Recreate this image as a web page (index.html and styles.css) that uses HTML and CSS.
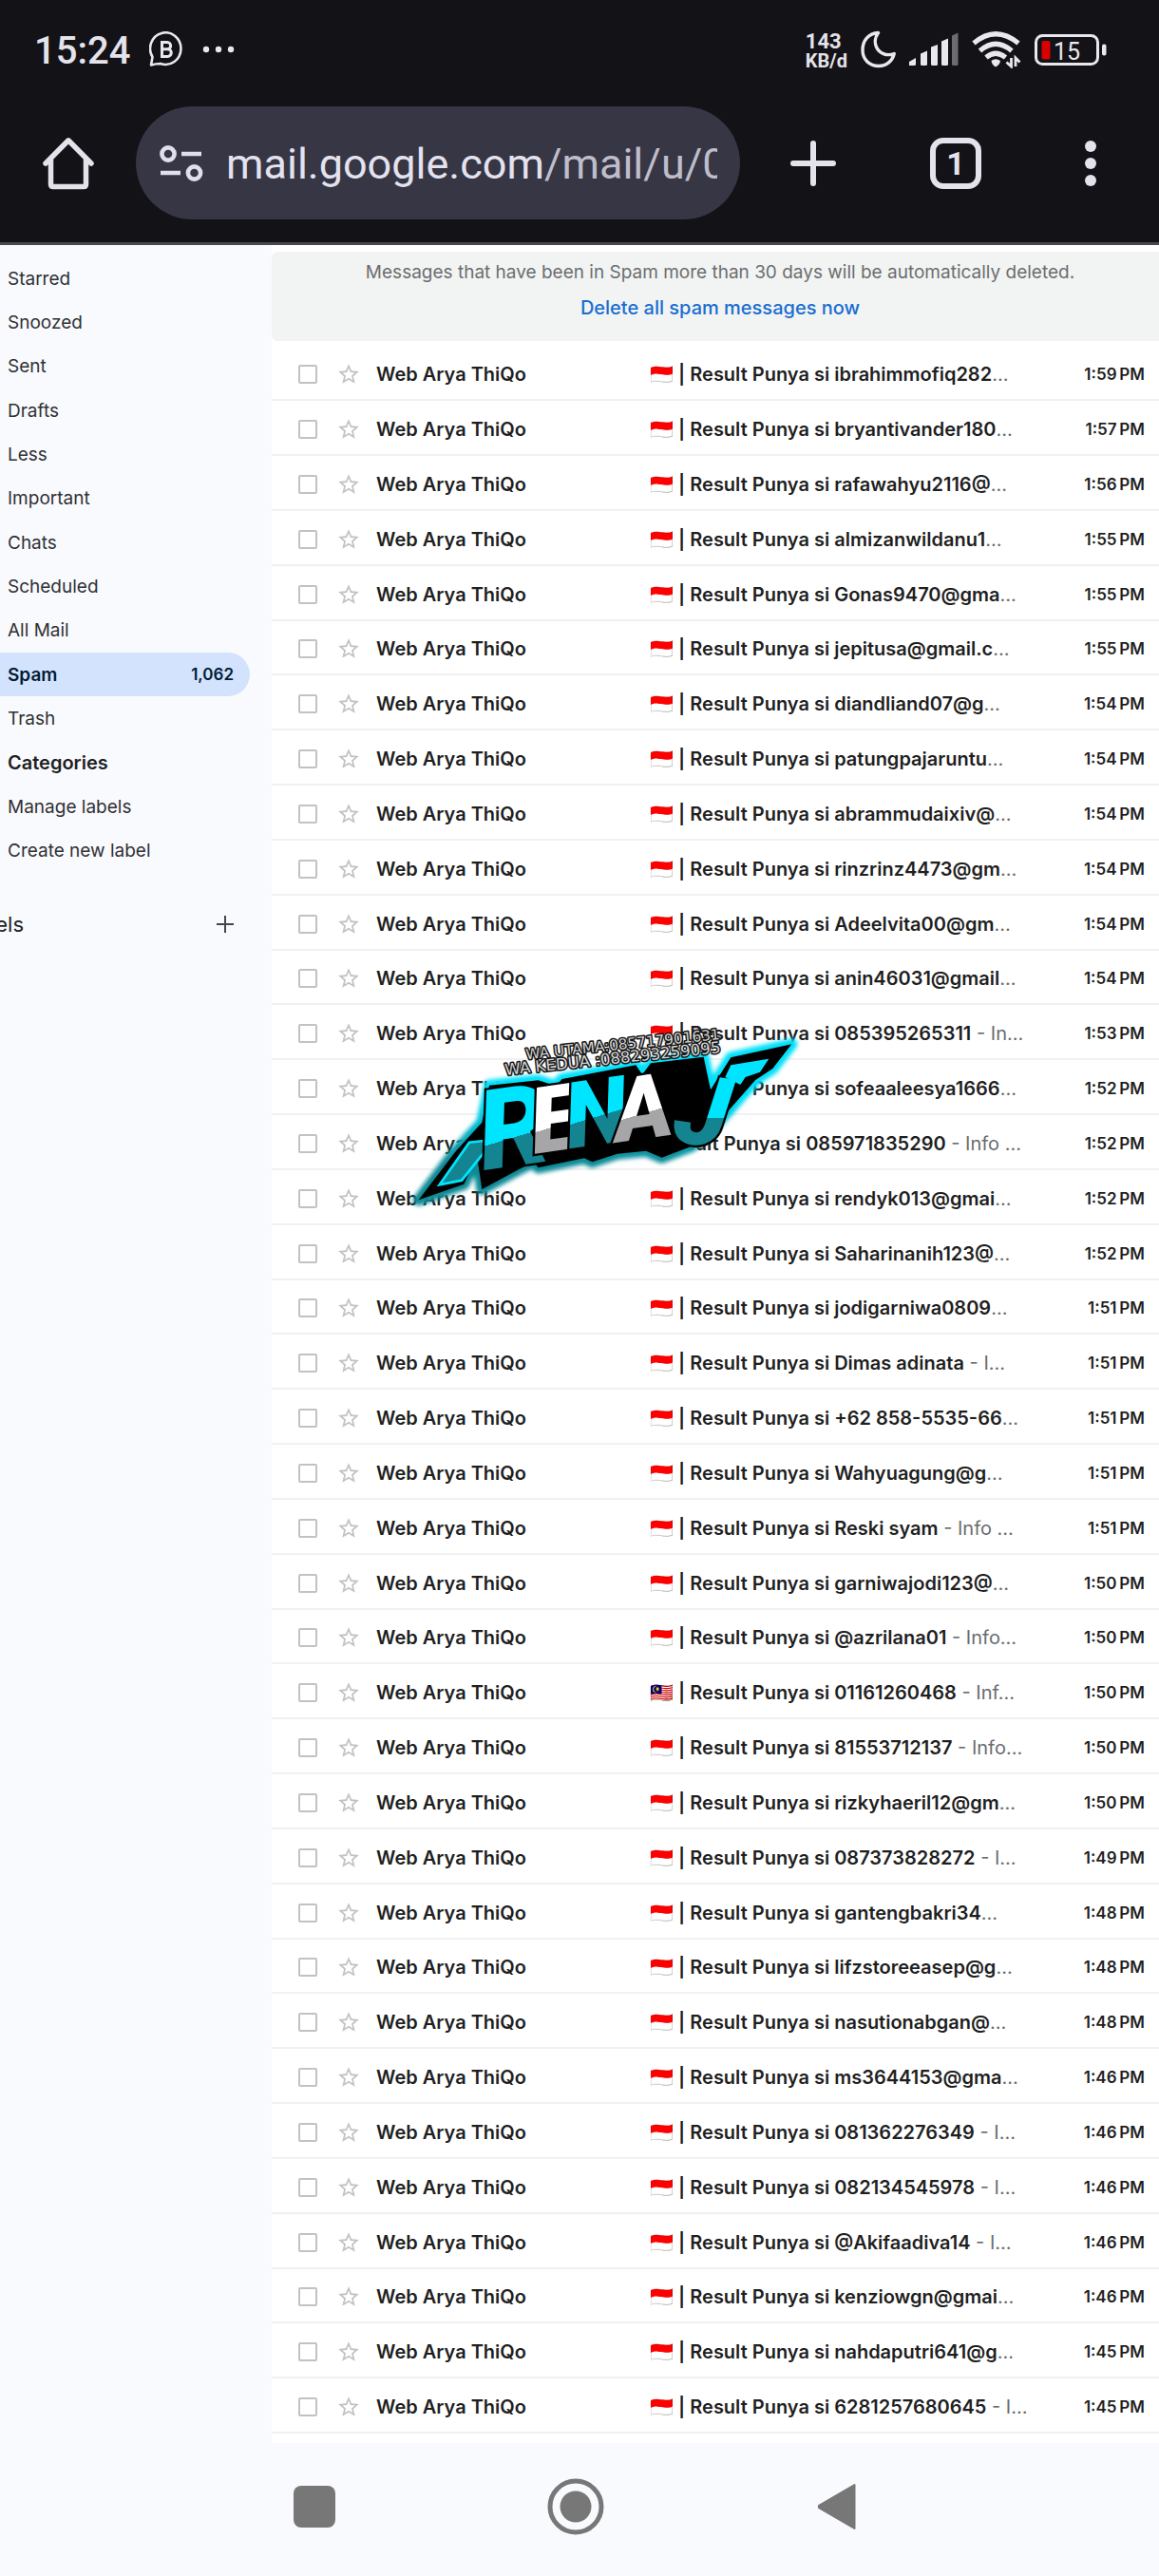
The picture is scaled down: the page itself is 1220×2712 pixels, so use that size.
FILE: index.html
```
<!DOCTYPE html>
<html lang="en">
<head>
<meta charset="utf-8">
<meta name="viewport" content="width=device-width, initial-scale=1">
<title>Spam - Gmail</title>
<link rel="stylesheet" href="styles.css">
</head>
<body>
<header class="chrome">
  <div class="status">
    <span class="clock">15:24</span>
    <svg class="wa" width="36" height="38" viewBox="0 0 36 38" aria-hidden="true"><path d="M2 35.500 L3.500 27 A16.200 16.800 0 1 1 12 34 Q7 34 2 35.500 Z" fill="none" stroke="#e9e8ee" stroke-width="2.600" stroke-linejoin="round"/><path d="M13.500 11.500 h5.500 a3.600 3.600 0 0 1 0 7.300 h-5.500 z M13.500 18.800 h6 a3.800 3.800 0 0 1 0 7.600 h-6 z" fill="none" stroke="#e9e8ee" stroke-width="3"/></svg>
    <svg width="34" height="8" viewBox="0 0 34 8" aria-hidden="true"><g fill="#e9e8ee"><circle cx="4" cy="4" r="3.200"/><circle cx="17" cy="4" r="3.200"/><circle cx="30" cy="4" r="3.200"/></g></svg>
    <div class="indicators">
      <span class="speed"><span class="rate">143</span><span class="unit">KB/d</span></span>
      <svg width="37" height="40" viewBox="0 0 37 40" aria-hidden="true"><path d="M18.500 2.500 C8 3 2 11 2 20.500 C2 31 9.500 37.500 19 37.500 C27 37.500 33.500 32 35.200 24.500 C27 27.500 19.500 24 16.500 17.500 C14.200 12.500 15.500 6.500 18.500 2.500 Z" fill="none" stroke="#e9e8ee" stroke-width="3.400" stroke-linejoin="round"/></svg>
      <svg width="52" height="40" viewBox="0 0 52 40" aria-hidden="true"><g fill="#e9e8ee"><path d="M0 37 V33 L7 29 V35.500 Q7 37 5.500 37Z"/><path d="M12 24.500 L19 21.500 V35.500 Q19 37 17.500 37 H13.500 Q12 37 12 35.500Z"/><path d="M23 17.500 L30 15 V35.500 Q30 37 28.500 37 H24.500 Q23 37 23 35.500Z"/><path d="M34 11.500 L41 8.500 V35.500 Q41 37 39.500 37 H35.500 Q34 37 34 35.500Z"/></g><path d="M45 5.500 L51.500 2.500 V35.500 Q51.500 37 50 37 H46.500 Q45 37 45 35.500Z" fill="#6c6b70"/></svg>
      <svg width="52" height="40" viewBox="0 0 52 40" aria-hidden="true"><g fill="none" stroke="#e9e8ee" stroke-width="5.200"><path d="M2 13.500 Q25 -6 49 13.500"/><path d="M8.500 21.500 Q25 7 42 21.500"/><path d="M15 28.500 Q25 20 35.500 28.500"/></g><path d="M20.500 32 Q25 28.500 30 32 Q29.500 36 25 38.500 Q21 36 20.500 32Z" fill="#e9e8ee"/><path d="M41.500 29 V38 L36.500 33.500 M46 38 V29 L50.500 33.500" fill="none" stroke="#e9e8ee" stroke-width="2.800"/></svg>
      <svg width="76" height="40" viewBox="0 0 76 40" role="img" aria-label="Battery 15 percent"><rect x="1.500" y="5.500" width="65" height="30" rx="7" fill="none" stroke="#e9e8ee" stroke-width="3"/><rect x="7.500" y="11" width="9" height="19.500" rx="2" fill="#d80000"/><rect x="71" y="14.500" width="4.500" height="12" rx="2" fill="#e9e8ee"/><text class="batt" x="34" y="31" text-anchor="middle">15</text></svg>
    </div>
  </div>
  <div class="toolbar">
    <button class="home" aria-label="Home"><svg width="56" height="56" viewBox="0 0 56 56"><path d="M9.500 24 V50 Q9.500 52.500 12 52.500 H44 Q46.500 52.500 46.500 50 V24 M4 28 L28 3.800 L52 28" fill="none" stroke="#e4e2ea" stroke-width="5.500" stroke-linecap="round" stroke-linejoin="round"/></svg></button>
    <div class="omnibox">
      <svg width="46" height="40" viewBox="0 0 46 40" aria-hidden="true"><g fill="none" stroke="#e0dfee" stroke-width="4.600"><circle cx="9" cy="10" r="6.600"/><circle cx="36.500" cy="30" r="6.600"/><path d="M23 10 H44 M1 30 H22"/></g></svg>
      <button class="url">mail.google.com<span class="path">/mail/u/0</span></button>
    </div>
    <button class="new" aria-label="New tab"><svg width="48" height="48" viewBox="0 0 48 48"><path d="M24 3 V45 M3 24 H45" stroke="#e4e2ea" stroke-width="6" stroke-linecap="round"/></svg></button>
    <button class="tabs" aria-label="Open tabs"><span>1</span></button>
    <button class="more" aria-label="Menu"><svg width="12" height="48" viewBox="0 0 12 48"><g fill="#e4e2ea"><circle cx="6" cy="6" r="6"/><circle cx="6" cy="24" r="6"/><circle cx="6" cy="42" r="6"/></g></svg></button>
  </div>
</header>

<div class="page">
  <aside class="side">
    <nav class="folders" aria-label="Folders">
      <a href="#starred">Starred</a>
      <a href="#snoozed">Snoozed</a>
      <a href="#sent">Sent</a>
      <a href="#drafts">Drafts</a>
      <a href="#less">Less</a>
      <a href="#important">Important</a>
      <a href="#chats">Chats</a>
      <a href="#scheduled">Scheduled</a>
      <a href="#all">All Mail</a>
      <a href="#spam" class="current">Spam<span class="count">1,062</span></a>
      <a href="#trash">Trash</a>
      <a href="#categories" class="strong">Categories</a>
      <a href="#manage">Manage labels</a>
      <a href="#create">Create new label</a>
    </nav>
    <div class="labels">
      <h2>Labels</h2>
      <button aria-label="Create new label"><svg width="18" height="18" viewBox="0 0 18 18"><path d="M9 0 V18 M0 9 H18" stroke="#444746" stroke-width="2"/></svg></button>
    </div>
  </aside>
  <main class="mail">
    <section class="banner">
      <p>Messages that have been in Spam more than 30 days will be automatically deleted.</p>
      <a href="#delete">Delete all spam messages now</a>
    </section>
    <table class="list" aria-label="Spam messages">
      <colgroup><col class="c-check"><col class="c-star"><col class="c-from"><col><col class="c-time"></colgroup>
      <tbody id="rows"></tbody>
    </table>
  </main>
</div>

<nav class="system" aria-label="System navigation">
  <button aria-label="Recent apps"><svg width="44" height="44" viewBox="0 0 44 44"><rect width="44" height="44" rx="8" fill="#777778"/></svg></button>
  <button aria-label="Home screen"><svg width="60" height="60" viewBox="0 0 60 60"><circle cx="30" cy="30" r="27" fill="none" stroke="#777778" stroke-width="5"/><circle cx="30" cy="30" r="16.500" fill="#777778"/></svg></button>
  <button aria-label="Back"><svg width="42" height="50" viewBox="0 0 42 50"><path d="M39.500 2 V48 L2.500 26.500 Q1 25 2.500 23.500 Z" fill="#777778" stroke="#777778" stroke-width="2" stroke-linejoin="round"/></svg></button>
</nav>

<svg class="watermark" width="440" height="230" viewBox="0 0 1320 690" role="img" aria-label="RENAJ">
  <defs>
    <linearGradient id="glow" x1="0" y1="0" x2="0" y2="1"><stop offset=".35" stop-color="#00e1fb"/><stop offset=".75" stop-color="#0c8a96"/></linearGradient>
    <linearGradient id="cyan" gradientUnits="userSpaceOnUse" x1="0" y1="-200" x2="30" y2="0"><stop offset=".62" stop-color="#00e5ff"/><stop offset=".62" stop-color="#148590"/></linearGradient>
    <linearGradient id="white" gradientUnits="userSpaceOnUse" x1="0" y1="-200" x2="30" y2="0"><stop offset=".66" stop-color="#ffffff"/><stop offset=".66" stop-color="#a6a6a8"/></linearGradient>
    <filter id="soft" x="-10%" y="-10%" width="120%" height="120%"><feGaussianBlur stdDeviation="7"/></filter>
    <path id="shape" d="M62 610 L180 455 L262 365 L285 248 L440 232 L495 250 L515 228 L748 184 L768 214 L795 178 L962 158 L984 262 L1048 160 L1240 118 L1180 195 L1125 232 L990 385 L925 440 L830 476 L780 455 L690 464 L610 490 L585 478 L440 508 L425 490 L375 515 L262 576 L246 470 L205 560 Z"/>
  </defs>
  <use href="#shape" fill="#0aa" stroke="url(#glow)" stroke-width="36" stroke-linejoin="round" filter="url(#soft)"/>
  <use href="#shape" fill="#000"/>
  <path d="M128 562 L222 428 L300 420 L198 548 Z" fill="#148590" stroke="#00e5ff" stroke-width="8"/>
  <g class="logo">
    <text transform="translate(268 516) rotate(-8)" font-size="350" fill="url(#cyan)">R</text>
    <text transform="translate(428 464) rotate(-8)" font-size="290" fill="url(#white)">E</text>
    <text transform="translate(538 448) rotate(-8)" font-size="290" fill="url(#cyan)">N</text>
    <text transform="translate(690 428) rotate(-8)" font-size="280" fill="url(#white)">A</text>
    <text transform="translate(860 424) rotate(8)" font-size="310" fill="url(#cyan)">J</text>
  </g>
  <path d="M1030 222 L1048 184 L1168 164 L1140 206 L1094 222 L1078 246 Z" fill="#00e5ff"/>
  <g class="contact">
    <text transform="translate(402 166) rotate(-6)">WA UTAMA:085717901631</text>
    <text transform="translate(336 216) rotate(-6)" class="second">WA KEDUA :088293259095</text>
  </g>
</svg>
<script src="rows.js"></script>
</body>
</html>
```
FILE: styles.css
```
* { box-sizing: border-box; }
body { margin: 0; background: #f9fafe; color: #1f1f1f; font-family: Inter, "Noto Sans", sans-serif; position: relative; }
button { border: 0; padding: 0; background: none; color: inherit; display: flex; align-items: center; justify-content: center; font: inherit; }
svg { display: block; flex: none; }
a { text-decoration: none; color: inherit; }

/* Phone status bar and browser toolbar */
.chrome { background: #131217; border-bottom: 3px solid #48474c; color: #e4e2ea; font-family: Roboto, sans-serif; padding-bottom: 24px; }
.status { display: flex; align-items: center; height: 112px; padding: 0 55px 8px 36px; gap: 20px; }
.clock { font-size: 40px; font-weight: 500; line-height: 44px; padding-top: 4px; }
.indicators { display: flex; align-items: center; gap: 14px; margin-left: auto; }
.speed { display: flex; flex-direction: column; font-weight: 700; font-size: 20px; line-height: 20px; padding-top: 4px; }
.rate { font-size: 22px; }
.batt { font-size: 25px; fill: #e9e8ee; }
.toolbar { display: flex; align-items: center; }
.home { width: 143px; height: 119px; }
.omnibox { display: flex; align-items: center; gap: 24px; flex: 1; min-width: 0; height: 119px; border-radius: 60px; background: #363645; padding: 0 24px 0 25px; }
.url { flex: 1; min-width: 0; overflow: hidden; justify-content: flex-start; white-space: nowrap; font-size: 45px; line-height: 60px; padding-top: 2px; color: #e4e2ee; }
.path { color: #bfbdca; }
.new { width: 154px; height: 119px; }
.tabs { width: 146px; height: 119px; }
.tabs span { width: 54px; height: 54px; border: 6px solid #e4e2ea; border-radius: 14px; font-size: 34px; font-weight: 700; line-height: 42px; text-align: center; }
.more { width: 141px; height: 119px; padding-right: 4px; }

/* Sidebar */
.page { display: grid; grid-template-columns: 286px minmax(0, 1fr); }
.side { padding: 12px 23px 0 0; }
.folders { display: flex; flex-direction: column; font-size: 19px; }
.folders a { display: flex; align-items: center; justify-content: space-between; height: 46px; padding: 0 17px 0 8px; border-radius: 0 23px 23px 0; color: #303134; }
.folders a:nth-child(3n) { height: 47px; }
.folders .current { background: #d3e2fd; color: #001d35; font-weight: 600; }
.folders .strong { color: #1f1f1f; font-weight: 600; font-size: 20px; }
.count { font-size: 17px; }
.labels { display: flex; align-items: center; justify-content: space-between; margin-top: 37px; padding-right: 17px; height: 36px; }
.labels h2 { display: flex; justify-content: flex-end; width: 25px; margin: 0; overflow: hidden; font-size: 22px; font-weight: 400; line-height: 36px; }

/* Message list */
.mail { background: #fff; padding: 7px 0 10px; }
.banner { height: 94px; padding: 3px 0 0 10px; border-radius: 6px 0 0 6px; background: #f2f4f3; text-align: center; font-size: 19px; line-height: 38px; color: #6b6d70; }
.banner p { margin: 0; }
.banner a { display: block; font-size: 20px; line-height: 36px; font-weight: 500; color: #1a6dd1; }
.list { width: 100%; margin-top: 5px; border-collapse: separate; border-spacing: 0; table-layout: fixed; font-size: 20px; line-height: 24px; white-space: nowrap; }
.c-check { width: 68px; }
.c-star { width: 42px; }
.c-from { width: 288px; }
.c-time { width: 110px; }
.list td { height: 58px; padding: 3px 0 0; border-bottom: 2px solid #f1f1f3; vertical-align: middle; overflow: hidden; }
.list tr:nth-child(6n) td { height: 57px; }
.list input { appearance: none; display: block; width: 20px; height: 20px; margin: 0 0 0 28px; border: 2px solid #c2c2c3; border-radius: 2px; }
.list .from, .list .topic { font-weight: 600; }
.list .rest { color: #6a6c70; font-weight: 400; }
.list .time { padding-right: 15px; text-align: right; font-size: 17px; font-weight: 600; }

/* Android navigation */
.system { display: flex; height: 140px; padding: 0 202px 7px 194px; }
.system button { flex: 1; }

/* Floating watermark */
.watermark { position: absolute; left: 420px; top: 1060px; }
.logo { font-family: Roboto, sans-serif; font-weight: 900; font-style: italic; stroke: #000; stroke-width: 14px; paint-order: stroke; }
.contact { font-family: "DejaVu Sans", sans-serif; font-size: 46px; fill: #d2d2d2; stroke: #151515; stroke-width: 9px; paint-order: stroke; stroke-linejoin: round; }
.contact .second { font-size: 50px; }
```
FILE: rows.js
```
// Each message: subject tail, snippet after the subject, minutes past one o'clock, flag if not the usual one.
const messages = [
  ["ibrahimmofiq282", "…", 59], ["bryantivander180", "…", 57], ["rafawahyu2116@", "…", 56],
  ["almizanwildanu1", "…", 55], ["Gonas9470@gma", "…", 55], ["jepitusa@gmail.c", "…", 55],
  ["diandliand07@g", "…", 54], ["patungpajaruntu", "…", 54], ["abrammudaixiv@", "…", 54],
  ["rinzrinz4473@gm", "…", 54], ["Adeelvita00@gm", "…", 54], ["anin46031@gmail", "…", 54],
  ["085395265311", " - In…", 53], ["sofeaaleesya1666", "…", 52], ["085971835290", " - Info …", 52, ""],
  ["rendyk013@gmai", "…", 52], ["Saharinanih123@", "…", 52], ["jodigarniwa0809", "…", 51],
  ["Dimas adinata", " - I…", 51], ["+62 858-5535-66", "…", 51], ["Wahyuagung@g", "…", 51],
  ["Reski syam", " - Info …", 51], ["garniwajodi123@", "…", 50], ["@azrilana01", " - Info…", 50],
  ["01161260468", " - Inf…", 50, "🇲🇾"], ["81553712137", " - Info…", 50], ["rizkyhaeril12@gm", "…", 50],
  ["087373828272", " - I…", 49], ["gantengbakri34", "…", 48], ["lifzstoreeasep@g", "…", 48],
  ["nasutionabgan@", "…", 48], ["ms3644153@gma", "…", 46], ["081362276349", " - I…", 46],
  ["082134545978", " - I…", 46], ["@Akifaadiva14", " - I…", 46], ["kenziowgn@gmai", "…", 46],
  ["nahdaputri641@g", "…", 45], ["6281257680645", " - I…", 45]
];
const star = '<svg width="26" height="26" viewBox="0 0 24 24"><path fill="#c2c2c3" d="M22 9.240l-7.190-.620L12 2 9.190 8.630 2 9.240l5.460 4.730L5.820 21 12 17.270 18.180 21l-1.630-7.030L22 9.240zM12 15.400l-3.760 2.270 1-4.280-3.320-2.880 4.380-.380L12 6.100l1.710 4.040 4.380.380-3.320 2.880 1 4.280L12 15.400z"/></svg>';
document.getElementById("rows").innerHTML = messages.map(([who, rest, min, flag = "🇮🇩"]) => `
  <tr>
    <td><input type="checkbox" aria-label="Select ${who}"></td>
    <td><button aria-label="Star ${who}">${star}</button></td>
    <td class="from">Web Arya ThiQo</td>
    <td class="topic">${flag} | Result Punya si ${who}<span class="rest">${rest}</span></td>
    <td class="time">1:${min}\u202fPM</td>
  </tr>`).join("");
```
